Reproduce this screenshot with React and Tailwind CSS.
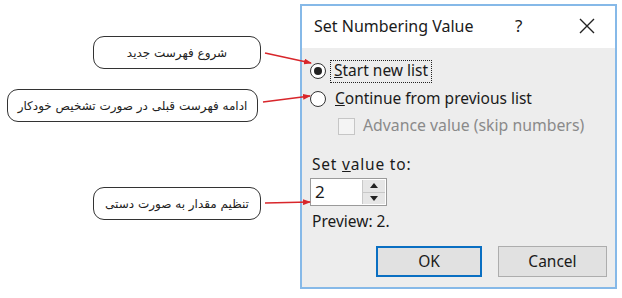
import React from 'react'

function Callout({ text, className }) {
    return (
        <div
            dir="rtl"
            className={"h-[33px] flex items-center justify-center border border-[#333] rounded-[11px] bg-white text-[12px] text-[#222] " + className}
            style={{ fontFamily: '"DejaVu Sans", sans-serif' }}
        >
            {text}
        </div>
    )
}

function Radio({ checked }) {
    return (
        <div className="w-[16px] h-[16px] rounded-full border border-[#333] bg-white flex items-center justify-center">
            {checked && <div className="w-[8px] h-[8px] rounded-full bg-[#222]" />}
        </div>
    )
}

function Arrows() {
    return (
        <svg className="absolute left-0 top-0 pointer-events-none" width="622" height="298">
            <defs>
                <marker id="head" markerWidth="8" markerHeight="6" refX="7" refY="3" orient="auto" markerUnits="userSpaceOnUse">
                    <path d="M0,0 L8,3 L0,6 Z" fill="#d8262b" />
                </marker>
            </defs>
            <line x1="265" y1="53" x2="311" y2="63" stroke="#d8262b" strokeWidth="1.6" markerEnd="url(#head)" />
            <line x1="263" y1="102" x2="310" y2="96" stroke="#d8262b" strokeWidth="1.6" markerEnd="url(#head)" />
            <line x1="265" y1="203" x2="310" y2="202" stroke="#d8262b" strokeWidth="1.6" markerEnd="url(#head)" />
        </svg>
    )
}

export default function App() {
    return (
        <div className="relative w-[622px] h-[298px] bg-white flex overflow-hidden">
            {/* callouts */}
            <div className="w-[300px] flex flex-col">
                <Callout text="شروع فهرست جدید" className="ml-[93px] w-[168px] mt-[36px]" />
                <Callout text="ادامه فهرست قبلی در صورت تشخیص خودکار" className="ml-[7px] w-[251px] mt-[20px]" />
                <Callout text="تنظیم مقدار به صورت دستی" className="ml-[93px] w-[168px] mt-[65px]" />
            </div>

            {/* dialog */}
            <div
                className="mt-[4px] w-[317px] h-[285px] border-2 border-[#86b9e8] flex flex-col text-[#1a1a1a]"
                style={{ fontFamily: '"Noto Sans", "Open Sans", sans-serif' }}
            >
                <div className="h-[42px] bg-white flex items-center pl-[12px] pr-[20px] pb-[2px]">
                    <div className="text-[16px] flex-1">Set Numbering Value</div>
                    <div className="text-[17px] w-[20px] mr-[44px]">?</div>
                    <svg width="16" height="16" viewBox="0 0 16 16">
                        <path d="M1 1 L15 15 M15 1 L1 15" stroke="#222" strokeWidth="1.4" />
                    </svg>
                </div>
                <div className="flex-1 bg-[#ededed] pl-[8px] flex flex-col text-[15.5px]">
                    <div className="mt-[11px] h-[24px] flex items-center">
                        <Radio checked />
                        <div className="ml-[4px] px-[3px] h-[23px] flex items-center border border-dotted border-[#222]">
                            <span><span className="underline">S</span>tart new list</span>
                        </div>
                    </div>
                    <div className="mt-[4px] h-[24px] flex items-center">
                        <Radio />
                        <span className="ml-[9px]"><span className="underline">C</span>ontinue from previous list</span>
                    </div>
                    <div className="mt-[3px] h-[24px] flex items-center pl-[28px]">
                        <div className="w-[17px] h-[17px] border border-[#c6c6c6] bg-[#f4f4f4]" />
                        <span className="ml-[8px] text-[#8a8a8a] text-[15.8px]">Advance value (skip numbers)</span>
                    </div>
                    <div className="mt-[17px] h-[20px] flex items-center pl-[2px] tracking-[0.8px]">
                        <span>Set <span className="underline">v</span>alue to:</span>
                    </div>
                    <div className="mt-[3px] w-[77px] h-[28px] border border-[#9a9a9a] bg-white flex">
                        <div className="flex-1 flex items-center pl-[4px] text-[17px]">2</div>
                        <div className="w-[23px] my-[1px] mr-[1px] flex flex-col border-l border-[#c8c8c8]">
                            <div className="flex-1 bg-[#e6e6e6] flex items-center justify-center border-b border-[#c8c8c8]">
                                <svg width="8" height="5" viewBox="0 0 8 5"><path d="M0 5 L4 0 L8 5 Z" fill="#222" /></svg>
                            </div>
                            <div className="flex-1 bg-[#e6e6e6] flex items-center justify-center">
                                <svg width="8" height="5" viewBox="0 0 8 5"><path d="M0 0 L4 5 L8 0 Z" fill="#222" /></svg>
                            </div>
                        </div>
                    </div>
                    <div className="mt-[6px] h-[20px] flex items-center pl-[2px]">Preview: 2.</div>
                    <div className="mt-[14px] flex gap-[16px] pl-[66px]">
                        <div className="w-[106px] h-[31px] border-2 border-[#0a6fc2] bg-[#e1e1e1] flex items-center justify-center">OK</div>
                        <div className="w-[109px] h-[31px] border border-[#adadad] bg-[#e1e1e1] flex items-center justify-center">Cancel</div>
                    </div>
                </div>
            </div>

            <Arrows />
        </div>
    )
}
